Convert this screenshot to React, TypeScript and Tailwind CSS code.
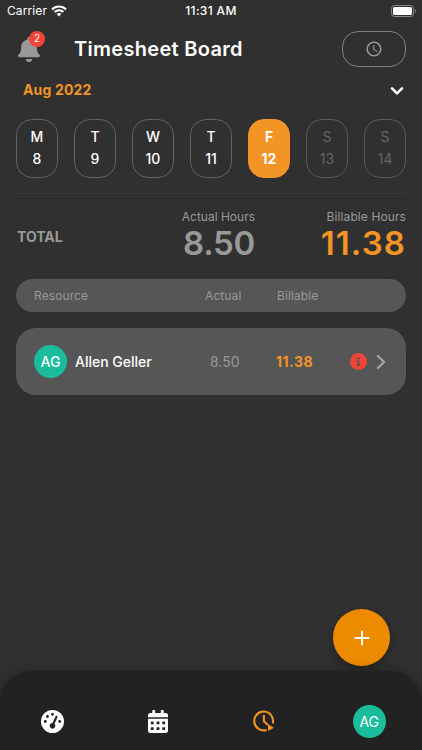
import { FaBell, FaCalendarAlt, FaInfo } from 'react-icons/fa'
import { FaGaugeHigh } from 'react-icons/fa6'
import { MdAccessTime } from 'react-icons/md'

const days = [
  { label: 'M', date: 8 },
  { label: 'T', date: 9 },
  { label: 'W', date: 10 },
  { label: 'T', date: 11 },
  { label: 'F', date: 12, active: true },
  { label: 'S', date: 13, disabled: true },
  { label: 'S', date: 14, disabled: true },
]

function StatusBar() {
  return (
    <div className="relative flex h-[22px] items-center justify-between pl-[7px] pr-[6px] text-[12px]">
      <div className="flex items-center gap-[4px]">
        <span className="tracking-[0.1px]">Carrier</span>
        <svg width="16" height="12" viewBox="0 0 16 12" fill="none" stroke="white" strokeWidth="2.1">
          <path d="M1 4.4a10 10 0 0 1 14 0" />
          <path d="M3.6 7.1a6.2 6.2 0 0 1 8.8 0" />
          <path d="M8 11.5 5.6 9.1a3.4 3.4 0 0 1 4.8 0Z" fill="white" stroke="none" />
        </svg>
      </div>
      <span className="absolute inset-x-0 text-center font-medium tracking-[0.35px]">11:31 AM</span>
      <svg width="25" height="12" viewBox="0 0 25 12" fill="none">
        <rect x="0.5" y="0.5" width="22" height="11" rx="3" stroke="#8a8a8a" />
        <rect x="2" y="2" width="19" height="8" rx="1.6" fill="white" />
        <path d="M24 4v4c1.1-.6 1.1-3.4 0-4Z" fill="#8a8a8a" />
      </svg>
    </div>
  )
}

function Header() {
  return (
    <header className="flex h-[54px] items-center pl-[18px] pr-4">
      <div className="relative mr-[34px]">
        <FaBell className="h-[25px] w-[22px] text-[#999999]" />
        <span className="absolute -top-[6px] left-[11px] flex size-[16px] items-center justify-center rounded-full bg-[#f44336] text-[10px]">
          2
        </span>
      </div>
      <h1 className="flex-1 text-[20px] font-semibold tracking-[0.3px]">Timesheet Board</h1>
      <button className="flex h-9 w-16 items-center justify-center rounded-[16px] border border-[#808080]">
        <MdAccessTime className="size-[18px] text-[#999999]" />
      </button>
    </header>
  )
}

function DayPicker() {
  return (
    <div className="mx-4 flex justify-between border-b border-[#3a3a3a] pb-[15px]">
      {days.map((day) => (
        <button
          key={day.date}
          className={`flex h-[59px] w-[42px] flex-col items-center rounded-[16px] border pt-[6px] text-[14px] leading-[22px] ${
            day.active
              ? 'border-[#f39426] bg-[#f39426] font-bold'
              : day.disabled
                ? 'border-[#595959] text-[#666666]'
                : 'border-[#626262] font-medium'
          }`}
        >
          <span>{day.label}</span>
          <span>{day.date}</span>
        </button>
      ))}
    </div>
  )
}

function Totals() {
  return (
    <section className="flex items-start pl-[17px] pr-4 pt-[14px] text-[#999999]">
      <h2 className="w-[148px] pt-[19px] text-[14px] leading-5 font-bold">TOTAL</h2>
      <div className="w-[90px] text-right">
        <p className="text-[12px] leading-[18px]">Actual Hours</p>
        <p className="text-[33px] leading-[35px] font-semibold tracking-[-0.3px]">8.50</p>
      </div>
      <div className="flex-1 text-right">
        <p className="text-[12px] leading-[18px] tracking-[0.1px]">Billable Hours</p>
        <p className="text-[33px] leading-[35px] font-semibold tracking-[1.1px] text-[#f39426]">11.38</p>
      </div>
    </section>
  )
}

function ResourceTable() {
  return (
    <section className="mx-4">
      <div className="mt-[18px] flex h-[33px] items-center rounded-full bg-[#565656] pl-[18px] text-[12px] tracking-[0.1px] text-[#999999]">
        <span className="w-[171px]">Resource</span>
        <span className="w-[72px]">Actual</span>
        <span>Billable</span>
      </div>
      <div className="mt-4 flex h-[67px] items-center rounded-[20px] bg-[#565656] pl-[18px] pr-5">
        <span className="mr-2 flex size-[33px] items-center justify-center rounded-full bg-[#1abc9c] text-[14px] font-medium">AG</span>
        <span className="w-[135px] text-[14px] font-medium">Allen Geller</span>
        <span className="w-[66px] text-[14px] text-[#999999]">8.50</span>
        <span className="flex-1 text-[14px] font-bold tracking-[0.5px] text-[#f39426]">11.38</span>
        <span className="mr-[9px] flex size-[17px] items-center justify-center rounded-full bg-[#f44336]">
          <FaInfo className="size-[9px] text-[#565656]" />
        </span>
        <svg width="10" height="16" viewBox="0 0 10 16" fill="none" stroke="#a3a3a3" strokeWidth="2.3">
          <path d="m1.2 1.2 6.8 6.8-6.8 6.8" />
        </svg>
      </div>
    </section>
  )
}

function TabBar() {
  return (
    <nav className="grid h-[79px] grid-cols-4 items-center justify-items-center rounded-t-[32px] bg-[#222222] pt-[21px] shadow-[0_0_12px_rgba(0,0,0,0.3)]">
      <FaGaugeHigh className="size-[23px]" />
      <FaCalendarAlt className="h-[23px] w-5" />
      <svg width="22" height="22" viewBox="0 0 22 22" fill="none" stroke="#f39426" strokeWidth="2.1">
        <path d="M13.5 19.9A9.4 9.4 0 1 1 19.7 13.4" />
        <path d="M10.9 5v6.3l4 3.8" />
        <path d="m15 14.2 6 3.5-6 3.3Z" fill="#f39426" stroke="none" />
      </svg>
      <span className="flex size-[33px] items-center justify-center rounded-full bg-[#1abc9c] text-[14px]">AG</span>
    </nav>
  )
}

export default function App() {
  return (
    <div className="flex h-[750px] w-[422px] flex-col overflow-hidden bg-[#303030] font-[Inter,sans-serif] text-white">
      <StatusBar />
      <Header />
      <div className="flex h-[43px] items-start justify-between pl-[23px] pr-[18px] pt-1">
        <span className="text-[14px] leading-[20px] font-bold tracking-[0.15px] text-[#f39426]">Aug 2022</span>
        <svg className="mt-[6px]" width="14" height="10" viewBox="0 0 14 10" fill="none" stroke="white" strokeWidth="2.6" strokeLinecap="round" strokeLinejoin="round">
          <path d="m2 2.3 5 5 5-5" />
        </svg>
      </div>
      <DayPicker />
      <Totals />
      <ResourceTable />

      <div className="mt-auto flex justify-end pb-[5px] pr-8">
        <button className="flex size-[57px] items-center justify-center rounded-full bg-[#ed8b00] shadow-[0_3px_8px_rgba(0,0,0,0.3)]">
          <svg width="16" height="16" viewBox="0 0 16 16" stroke="white" strokeWidth="2">
            <path d="M8 .7v14.6M.7 8h14.6" />
          </svg>
        </button>
      </div>
      <TabBar />
    </div>
  )
}
